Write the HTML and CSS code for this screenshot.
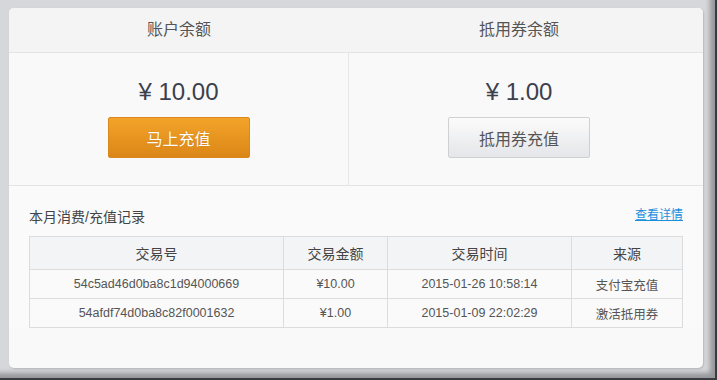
FILE: index.html
```html
<!DOCTYPE html>
<html lang="zh-CN">
<head>
    <meta charset="UTF-8">
    <title>账户余额</title>
    <link rel="stylesheet" href="styles.css">
</head>
<body>
    <div class="frame">
        <div class="card">
            <div class="balance">
                <div class="balance-col">
                    <div class="balance-head">账户余额</div>
                    <div class="balance-body">
                        <div class="amount">¥ 10.00</div>
                        <button class="btn btn-orange">马上充值</button>
                    </div>
                </div>
                <div class="balance-col">
                    <div class="balance-head">抵用券余额</div>
                    <div class="balance-body">
                        <div class="amount">¥ 1.00</div>
                        <button class="btn btn-grey">抵用券充值</button>
                    </div>
                </div>
            </div>

            <div class="records">
                <div class="records-top">
                    <span class="records-title">本月消费/充值记录</span>
                    <a href="#" class="more">查看详情</a>
                </div>
                <table>
                    <colgroup>
                        <col class="c-no">
                        <col class="c-amt">
                        <col class="c-time">
                        <col>
                    </colgroup>
                    <thead>
                        <tr>
                            <th>交易号</th>
                            <th>交易金额</th>
                            <th>交易时间</th>
                            <th>来源</th>
                        </tr>
                    </thead>
                    <tbody>
                        <tr>
                            <td>54c5ad46d0ba8c1d94000669</td>
                            <td>¥10.00</td>
                            <td>2015-01-26 10:58:14</td>
                            <td>支付宝充值</td>
                        </tr>
                        <tr>
                            <td>54afdf74d0ba8c82f0001632</td>
                            <td>¥1.00</td>
                            <td>2015-01-09 22:02:29</td>
                            <td>激活抵用券</td>
                        </tr>
                    </tbody>
                </table>
            </div>
        </div>
    </div>
</body>
</html>
```

FILE: styles.css
```css
body {
    margin: 0;
    font-family: "Liberation Sans", "Noto Sans CJK SC", sans-serif;
    background-color: #d6d7db;
}
.frame {
    width: 717px;
    height: 380px;
    box-sizing: border-box;
    padding: 8px 0 0 9px;
    background-color: #d6d7db;
    border-right: 2px solid #3a3b40;
    border-bottom: 2px solid #3a3b40;
    box-shadow: inset -5px -5px 5px rgba(0, 0, 0, 0.3);
}
.card {
    width: 694px;
    height: 360px;
    background-color: #f9f9f9;
    border-radius: 5px;
    box-shadow: 1px 1px 2px rgba(0, 0, 0, 0.15);
    overflow: hidden;
}
.balance {
    display: grid;
    grid-template-columns: 340px 354px;
    border-bottom: 1px solid #e4e4e4;
}
.balance-col:first-child .balance-body {
    border-right: 1px solid #e6e6e6;
}
.balance-col:last-child {
    padding-right: 14px;
}
.balance-col:last-child .balance-head {
    margin-right: -14px;
    padding-right: 14px;
}
.balance-head {
    height: 44px;
    line-height: 44px;
    text-align: center;
    font-size: 16px;
    color: #555;
    background-color: #f4f4f4;
    border-bottom: 1px solid #e4e4e4;
}
.balance-body {
    height: 132px;
    box-sizing: border-box;
    padding-top: 25px;
    display: flex;
    flex-direction: column;
    align-items: center;
}
.amount {
    font-size: 24px;
    line-height: 28px;
    color: #3b404c;
}
.btn {
    margin-top: 11px;
    width: 142px;
    height: 41px;
    border-radius: 2px;
    font-family: inherit;
    font-size: 16px;
    cursor: pointer;
}
.btn-orange {
    color: white;
    background: linear-gradient(#f3a329, #db8718);
    border: 1px solid #d9891d;
    text-shadow: 0 0 1px rgba(120, 60, 0, 0.4);
}
.btn-grey {
    color: #555;
    background: linear-gradient(#fbfbfb, #e5e6e9);
    border: 1px solid #cfd0d4;
}
.records {
    padding: 20px 20px 0 20px;
    background-color: #fafafa;
}
.records-top {
    display: flex;
    justify-content: space-between;
    align-items: center;
    height: 20px;
    margin-bottom: 10px;
}
.records-title {
    font-size: 14px;
    color: #444;
}
.more {
    font-size: 12px;
    color: #1c8fdc;
    text-decoration: underline;
    margin-bottom: 5px;
}
table {
    width: 654px;
    border-collapse: collapse;
    table-layout: fixed;
}
th, td {
    border: 1px solid #dcdcdc;
    text-align: center;
    color: #555;
    padding: 0;
}
th {
    height: 32px;
    font-size: 14px;
    font-weight: normal;
    background-color: #f3f4f6;
    color: #444;
}
td {
    height: 28px;
    font-size: 12.5px;
    background-color: #fafafa;
}
.c-no { width: 254px; }
.c-amt { width: 104px; }
.c-time { width: 184px; }
```
